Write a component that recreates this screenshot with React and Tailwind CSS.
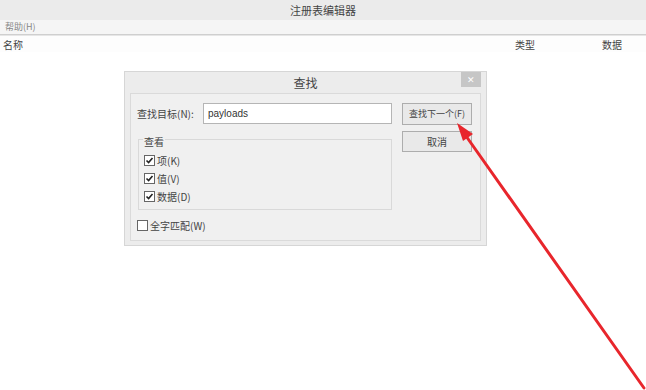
export default function App() {
  const font = { fontFamily: '"Noto Sans CJK SC", "Liberation Sans", sans-serif' };

  const Check = ({ checked, label }) => (
    <div className="flex items-center gap-[2px] h-[13px] text-[10px] text-[#444]">
      <span className="w-[11px] h-[11px] border border-[#666] bg-white flex items-center justify-center">
        {checked && (
          <svg width="9" height="9" viewBox="0 0 9 9">
            <path d="M1.5 4.5 L3.6 6.6 L7.5 2" fill="none" stroke="#222" strokeWidth="1.6" />
          </svg>
        )}
      </span>
      <span>{label}</span>
    </div>
  );

  return (
    <div className="relative w-[646px] h-[390px] bg-white overflow-hidden" style={font}>
      {/* window title */}
      <div className="h-[20px] bg-[#ebebeb] flex items-center justify-center text-[11px] text-[#444]">
        注册表编辑器
      </div>
      {/* menu */}
      <div className="h-[14px] bg-[#f5f5f5] flex items-center px-[5px] text-[9px] text-[#888]">
        帮助(H)
      </div>
      <div className="h-[2px] border-t border-[#cfcfcf] border-b border-b-[#e6e6e6]" />
      {/* list header */}
      <div className="h-[16px] flex items-center text-[10px] text-[#444] bg-[#fdfdfd]">
        <span className="pl-[3px] flex-1">名称</span>
        <span className="w-[87px]">类型</span>
        <span className="w-[44px]">数据</span>
      </div>

      {/* find dialog */}
      <div className="absolute left-[124px] top-[71px] w-[363px] h-[175px] bg-[#ececec] border border-[#d6d6d6] flex flex-col">
        <div className="relative h-[21px] flex items-center justify-center text-[12px] text-[#444]">
          查找
          <div className="absolute right-[5px] top-[0px] w-[20px] h-[15px] bg-[#c6c6c6] flex items-center justify-center text-white text-[9px]">
            ✕
          </div>
        </div>
        <div className="mx-[5px] mb-[4px] flex-1 bg-[#f0f0f0] border border-[#dadada] flex px-[6px] pt-[9px]">
          <div className="flex flex-col w-[255px]">
            <div className="flex items-center h-[21px]">
              <span className="w-[66px] text-[10px] text-[#444]">查找目标(N):</span>
              <div className="flex-1 h-[21px] bg-white border border-[#b5b5b5] px-[4px] text-[10px] text-[#333] flex items-center" style={{ fontFamily: '"Liberation Sans", sans-serif' }}>
                payloads
              </div>
            </div>
            <div className="mt-[15px] ml-[1px] h-[71px] border border-[#d9d9d9] relative px-[5px]">
              <span className="absolute left-[4px] top-[-4px] bg-[#f0f0f0] text-[10px] text-[#444] px-[1px] leading-[12px]">查看</span>
              <div className="flex flex-col gap-[5px] pt-[14px]">
                <Check checked label="项(K)" />
                <Check checked label="值(V)" />
                <Check checked label="数据(D)" />
              </div>
            </div>
            <div className="mt-[9px]">
              <Check label="全字匹配(W)" />
            </div>
          </div>
          <div className="ml-[10px] flex flex-col gap-[6px]">
            <div className="w-[70px] h-[22px] bg-[#e9e9e9] border border-[#adadad] flex items-center justify-center text-[9px] text-[#444]">
              查找下一个(F)
            </div>
            <div className="w-[70px] h-[21px] bg-[#e9e9e9] border border-[#adadad] flex items-center justify-center text-[10px] text-[#444]">
              取消
            </div>
          </div>
        </div>
      </div>

      {/* red arrow annotation */}
      <svg className="absolute left-0 top-0" width="646" height="390" viewBox="0 0 646 390">
        <line x1="644" y1="388" x2="466" y2="136" stroke="#e8262c" strokeWidth="3" strokeLinecap="round" />
        <polygon points="457,123 473,134 463,141" fill="#e8262c" />
      </svg>
    </div>
  );
}
